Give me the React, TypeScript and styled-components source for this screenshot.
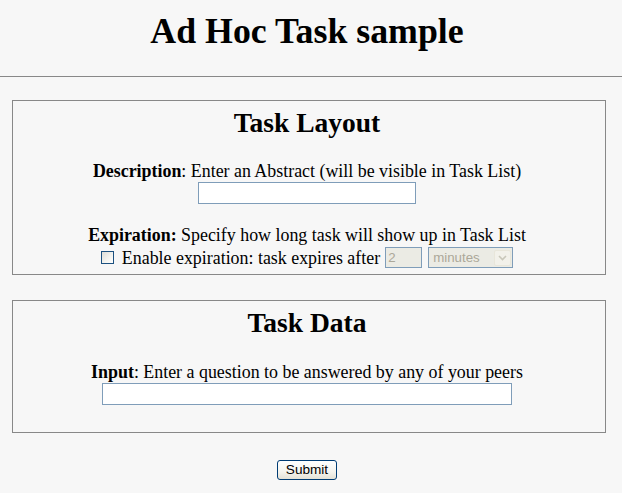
import { type FC } from "react";
import styled, { createGlobalStyle } from "styled-components";

const GlobalStyle = createGlobalStyle`
  html, body {
    margin: 0;
    padding: 0;
    background: #f7f7f7;
  }
  body {
    font-family: "Liberation Serif", "Times New Roman", serif;
    font-size: 17.9px;
    color: #000;
  }
`;

const Page = styled.div`
  width: 622px;
`;

const Title = styled.h1`
  margin: 0;
  box-sizing: border-box;
  height: 76px;
  padding: 11px 8px 0 0;
  font-size: 35.8px;
  line-height: 40px;
  font-weight: bold;
  text-align: center;
`;

const Rule = styled.hr`
  margin: 0;
  border: 0;
  height: 1px;
  background: #888;
`;

const Main = styled.div`
  padding: 23px 16px 0 12px;
  display: flex;
  flex-direction: column;
  gap: 25px;
`;

const Box = styled.div<{ $padBottom: number }>`
  border: 1px solid #888;
  padding: 7px 4px ${(p) => p.$padBottom}px 0;
  display: flex;
  flex-direction: column;
  align-items: center;
  text-align: center;
`;

const BoxTitle = styled.h2`
  margin: 0 0 23px;
  font-size: 27.5px;
  line-height: 30px;
  font-weight: bold;
`;

const Line = styled.div<{ $gap?: number }>`
  margin-top: ${(p) => p.$gap ?? 0}px;
  line-height: 20px;
  white-space: nowrap;
`;

const TextInput = styled.input<{ $width: number }>`
  display: block;
  box-sizing: border-box;
  width: ${(p) => p.$width}px;
  height: 22px;
  margin-top: 1px;
  border: 1px solid #7f9db9;
  background: #fff;
  padding: 0 3px;
  outline: none;
`;

const OptionRow = styled.div`
  margin-top: 2px;
  height: 21px;
  display: flex;
  align-items: center;
  line-height: 20px;
  white-space: nowrap;
`;

const Check = styled.span`
  box-sizing: border-box;
  width: 13px;
  height: 13px;
  border: 1px solid #1c5180;
  background: linear-gradient(135deg, #dcdcd7 0%, #f4f4f0 60%, #ffffff 100%);
  margin-right: 8px;
`;

const SmallInput = styled.input`
  box-sizing: border-box;
  width: 37px;
  height: 21px;
  margin-left: 5px;
  border: 1px solid #7f9db9;
  background: #ebebe4;
  color: #aca899;
  font-family: "Liberation Sans", Arial, sans-serif;
  font-size: 13.3px;
  padding: 0 2px;
`;

const FakeSelect = styled.div`
  box-sizing: border-box;
  width: 85px;
  height: 21px;
  margin-left: 6px;
  border: 1px solid #7f9db9;
  background: #ebebe4;
  display: flex;
  align-items: center;
  justify-content: space-between;
  padding: 0 1px 0 4px;
  color: #aca899;
  font-family: "Liberation Sans", Arial, sans-serif;
  font-size: 13.3px;
  line-height: 17px;
`;

const SelectArrow = styled.span`
  box-sizing: border-box;
  width: 17px;
  height: 16px;
  border: 1px solid #e8e6da;
  border-radius: 2px;
  background: #f2f1ea;
  display: flex;
  align-items: center;
  justify-content: center;
`;

const Footer = styled.div`
  padding: 27px 8px 0 0;
  display: flex;
  justify-content: center;
`;

const SubmitButton = styled.button`
  box-sizing: border-box;
  width: 60px;
  height: 20px;
  border: 1px solid #003c74;
  border-radius: 3px;
  background: linear-gradient(#ffffff 0%, #f5f4ee 60%, #e3e1d6 100%);
  font-family: "Liberation Sans", Arial, sans-serif;
  font-size: 13.6px;
  color: #000;
  padding: 0;
  line-height: 18px;
`;

const App: FC = () => {
  return (
    <Page>
      <GlobalStyle />
      <Title>Ad Hoc Task sample</Title>
      <Rule />
      <Main>
        <Box $padBottom={6}>
          <BoxTitle>Task Layout</BoxTitle>
          <Line>
            <b>Description</b>: Enter an Abstract (will be visible in Task List)
          </Line>
          <TextInput $width={218} type="text" />
          <Line $gap={21}>
            <b>Expiration:</b> Specify how long task will show up in Task List
          </Line>
          <OptionRow>
            <Check />
            Enable expiration: task expires after
            <SmallInput type="text" value="2" disabled readOnly />
            <FakeSelect>
              minutes
              <SelectArrow>
                <svg width="9" height="6" viewBox="0 0 9 6">
                  <path
                    d="M1 1 L4.5 4.5 L8 1"
                    fill="none"
                    stroke="#c9c7ba"
                    strokeWidth="1.6"
                  />
                </svg>
              </SelectArrow>
            </FakeSelect>
          </OptionRow>
        </Box>
        <Box $padBottom={27}>
          <BoxTitle>Task Data</BoxTitle>
          <Line $gap={1}>
            <b>Input</b>: Enter a question to be answered by any of your peers
          </Line>
          <TextInput $width={410} type="text" />
        </Box>
      </Main>
      <Footer>
        <SubmitButton type="button">Submit</SubmitButton>
      </Footer>
    </Page>
  );
};

export default App;
